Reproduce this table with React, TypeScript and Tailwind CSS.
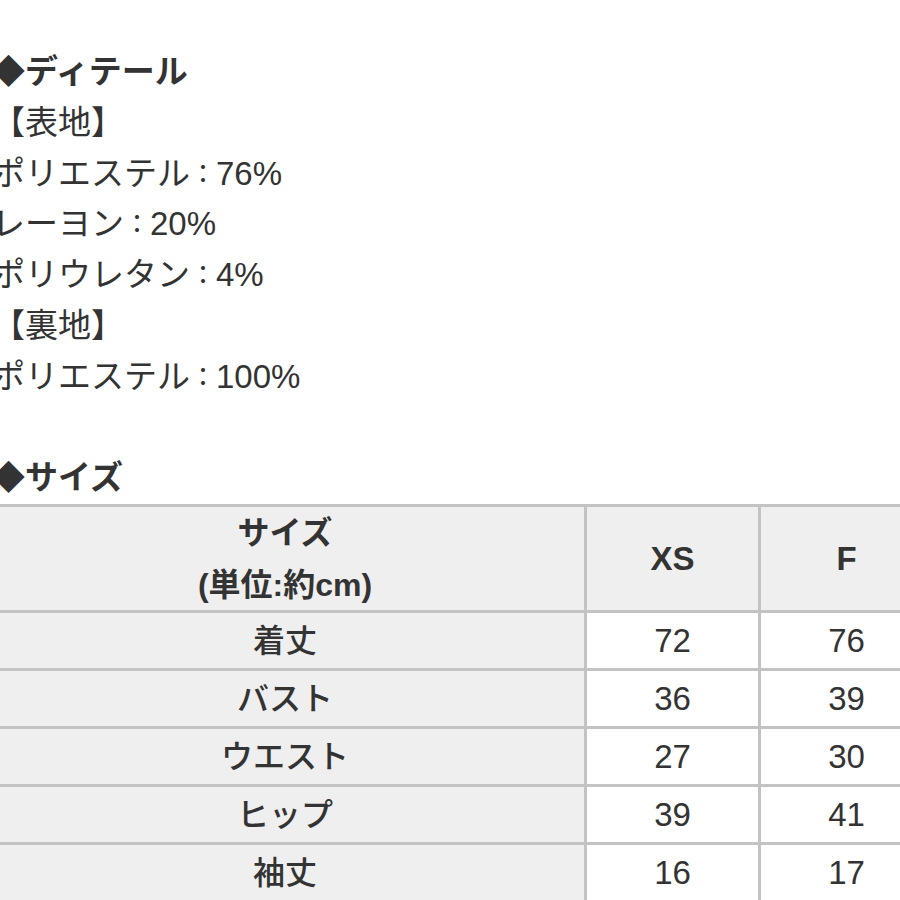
import React from 'react'

const font = { fontFamily: '"Liberation Sans", "Noto Sans CJK JP", sans-serif' }

const materials = [
  { title: '【表地】', items: [['ポリエステル', '76%'], ['レーヨン', '20%'], ['ポリウレタン', '4%']] },
  { title: '【裏地】', items: [['ポリエステル', '100%']] },
]

const rows = [
  { label: '着丈', xs: '72', f: '76' },
  { label: 'バスト', xs: '36', f: '39' },
  { label: 'ウエスト', xs: '27', f: '30' },
  { label: 'ヒップ', xs: '39', f: '41' },
  { label: '袖丈', xs: '16', f: '17' },
]

function Cell({ children, shaded, className = '' }: { children: React.ReactNode; shaded?: boolean; className?: string }) {
  return (
    <div
      className={
        'flex flex-col items-center justify-center border-r-[3px] border-b-[3px] border-[#c3c3c3] ' +
        (shaded ? 'bg-[#efefef] ' : 'bg-white ') +
        className
      }
    >
      {children}
    </div>
  )
}

export default function App() {
  return (
    <div className="w-[900px] h-[900px] overflow-hidden bg-white text-[#333333]" style={font}>
      <div className="pt-[47px] -ml-[8px] text-[33px] leading-[50.8px] whitespace-nowrap">
        <div className="font-bold">◆ディテール</div>
        {materials.map((m) => (
          <React.Fragment key={m.title}>
            <div>{m.title}</div>
            {m.items.map(([name, pct]) => (
              <div key={name + pct} className="flex items-center">
                <span>{name}</span>
                <span className="text-[26px]">：</span>
                <span>{pct}</span>
              </div>
            ))}
          </React.Fragment>
        ))}
        <div>&nbsp;</div>
        <div className="font-bold">◆サイズ</div>
      </div>

      <div className="-ml-[14px] w-[950px] grid grid-cols-[601px_174px_174px] border-t-[3px] border-[#c3c3c3]">
        <Cell shaded className="h-[106px] font-bold text-[32px] leading-[52px]">
          <span>サイズ</span>
          <span>(単位:約cm)</span>
        </Cell>
        <Cell shaded className="h-[106px] font-bold text-[33px]">XS</Cell>
        <Cell shaded className="h-[106px] font-bold text-[33px]">F</Cell>
        {rows.map((r) => (
          <React.Fragment key={r.label}>
            <Cell shaded className="h-[58px] font-medium text-[32px]">{r.label}</Cell>
            <Cell className="h-[58px] text-[33px]">{r.xs}</Cell>
            <Cell className="h-[58px] text-[33px]">{r.f}</Cell>
          </React.Fragment>
        ))}
      </div>
    </div>
  )
}
